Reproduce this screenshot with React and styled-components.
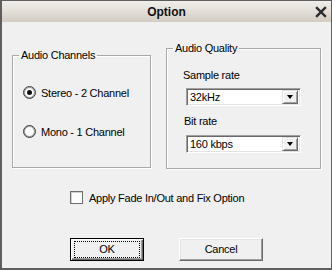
import React from "react";
import styled, { createGlobalStyle } from "styled-components";

const Global = createGlobalStyle`
  html, body { margin: 0; padding: 0; background: #f0f0f0; }
  * { box-sizing: border-box; }
`;

const Window = styled.div`
  width: 332px;
  height: 270px;
  background: #f0f0f0;
  border: 1px solid #5e5e5e;
  border-left-width: 2px;
  border-bottom-width: 2px;
  display: flex;
  flex-direction: column;
  font-family: "Liberation Sans", Arial, sans-serif;
  font-size: 11px;
  letter-spacing: -0.25px;
  color: #000;
`;

const TitleBar = styled.div`
  position: relative;
  height: 21px;
  flex: none;
  background: linear-gradient(#f1efeb, #e4e0d9 45%, #d2ccc1);
  display: flex;
  align-items: center;
  justify-content: center;
  font-weight: bold;
  font-size: 12px;
  letter-spacing: 0;
  color: #111;
`;

const Close = styled.div`
  position: absolute;
  right: 4px;
  top: 5px;
  width: 12px;
  height: 12px;
`;

const Body = styled.div`
  flex: 1;
  display: flex;
  flex-direction: column;
  padding: 0 10px 0 10px;
`;

const GroupRow = styled.div`
  display: flex;
  align-items: flex-start;
  gap: 15px;
`;

const Group = styled.fieldset`
  margin: ${(p) => p.$top}px 0 0 0;
  padding: 0;
  width: ${(p) => p.$w}px;
  height: ${(p) => p.$h}px;
  border: 1px solid #a8a8a8;
  box-shadow: 1px 1px 0 #fff, inset 1px 1px 0 #fff;
  min-width: 0;
  display: flex;
  flex-direction: column;
`;

const Legend = styled.legend`
  margin-left: 6px;
  padding: 0 2px;
  line-height: 13px;
  font-size: 11px;
`;

const Channels = styled.div`
  display: flex;
  flex-direction: column;
  gap: 26px;
  padding: 24px 0 0 10px;
`;

const OptionRow = styled.label`
  display: flex;
  align-items: center;
  gap: 5px;
  height: 13px;
  font-size: 11px;
`;

const Radio = styled.span`
  width: 13px;
  height: 13px;
  border-radius: 50%;
  border: 1px solid #3a3a3a;
  box-shadow: inset 0 0 0 1px #9a9a9a;
  background: #fff;
  display: flex;
  align-items: center;
  justify-content: center;
  &::after {
    content: "";
    width: 5px;
    height: 5px;
    border-radius: 50%;
    background: ${(p) => (p.$checked ? "#111" : "transparent")};
  }
`;

const Quality = styled.div`
  display: flex;
  flex-direction: column;
  padding: 13px 0 0 16px;
`;

const FieldLabel = styled.div`
  font-size: 11px;
  line-height: 14px;
  margin: ${(p) => p.$m};
`;

const Combo = styled.div`
  width: 115px;
  height: 18px;
  margin-left: 3px;
  background: #fff;
  border-top: 1px solid #a0a0a0;
  border-left: 1px solid #a0a0a0;
  border-right: 1px solid #fff;
  border-bottom: 1px solid #fff;
  box-shadow: inset 1px 1px 0 #696969, inset -1px -1px 0 #e3e3e3;
  display: flex;
  align-items: center;
  justify-content: space-between;
  padding: 2px 2px 2px 3px;
  font-size: 11px;
`;

const DropButton = styled.div`
  width: 16px;
  height: 14px;
  background: #f0f0f0;
  border-top: 1px solid #e3e3e3;
  border-left: 1px solid #e3e3e3;
  border-right: 1px solid #696969;
  border-bottom: 1px solid #696969;
  box-shadow: inset 1px 1px 0 #fff, inset -1px -1px 0 #a0a0a0;
  display: flex;
  align-items: center;
  justify-content: center;
  &::after {
    content: "";
    border-left: 3.5px solid transparent;
    border-right: 3.5px solid transparent;
    border-top: 4px solid #000;
  }
`;

const CheckRow = styled.label`
  display: flex;
  align-items: center;
  gap: 6px;
  margin: 22px 0 0 58px;
  font-size: 11px;
`;

const Box = styled.span`
  width: 13px;
  height: 13px;
  background: #fff;
  border: 1px solid #707070;
  box-shadow: inset 1px 1px 0 #d0d0d0;
`;

const Buttons = styled.div`
  display: flex;
  gap: 35px;
  margin: 34px 0 0 58px;
`;

const Button = styled.div`
  width: ${(p) => p.$w}px;
  height: 23px;
  display: flex;
  align-items: center;
  justify-content: center;
  font-size: 11px;
  background: #f0f0f0;
  border: 1px solid;
  border-color: ${(p) => (p.$default ? "#000" : "#fff #696969 #696969 #fff")};
  box-shadow: ${(p) =>
    p.$default
      ? "inset 1px 1px 0 #fff, inset -1px -1px 0 #696969, inset -2px -2px 0 #a0a0a0"
      : "inset -1px -1px 0 #a0a0a0, inset 1px 1px 0 #e3e3e3"};
  span {
    padding: 1px 20px;
    border: 1px dotted ${(p) => (p.$default ? "#000" : "transparent")};
    line-height: 13px;
    width: ${(p) => p.$w - 8}px;
    text-align: center;
  }
`;

export default function App() {
  return (
    <>
      <Global />
      <Window>
        <TitleBar>
          Option
          <Close>
            <svg width="12" height="12" viewBox="0 0 12 12">
              <path d="M2 2 L10 10 M10 2 L2 10" stroke="#2a2a2a" strokeWidth="2.4" strokeLinecap="square" />
            </svg>
          </Close>
        </TitleBar>
        <Body>
          <GroupRow>
            <Group $top={27} $w={139} $h={119}>
              <Legend>Audio Channels</Legend>
              <Channels>
                <OptionRow>
                  <Radio $checked />
                  Stereo - 2 Channel
                </OptionRow>
                <OptionRow>
                  <Radio />
                  Mono - 1 Channel
                </OptionRow>
              </Channels>
            </Group>
            <Group $top={20} $w={155} $h={127}>
              <Legend>Audio Quality</Legend>
              <Quality>
                <FieldLabel $m="0 0 6px 0">Sample rate</FieldLabel>
                <Combo>
                  32kHz
                  <DropButton />
                </Combo>
                <FieldLabel $m="8px 0 7px 1px">Bit rate</FieldLabel>
                <Combo>
                  160 kbps
                  <DropButton />
                </Combo>
              </Quality>
            </Group>
          </GroupRow>
          <CheckRow>
            <Box />
            Apply Fade In/Out and Fix Option
          </CheckRow>
          <Buttons>
            <Button $default $w={74}>
              <span>OK</span>
            </Button>
            <Button $w={84}>
              <span>Cancel</span>
            </Button>
          </Buttons>
        </Body>
      </Window>
    </>
  );
}
